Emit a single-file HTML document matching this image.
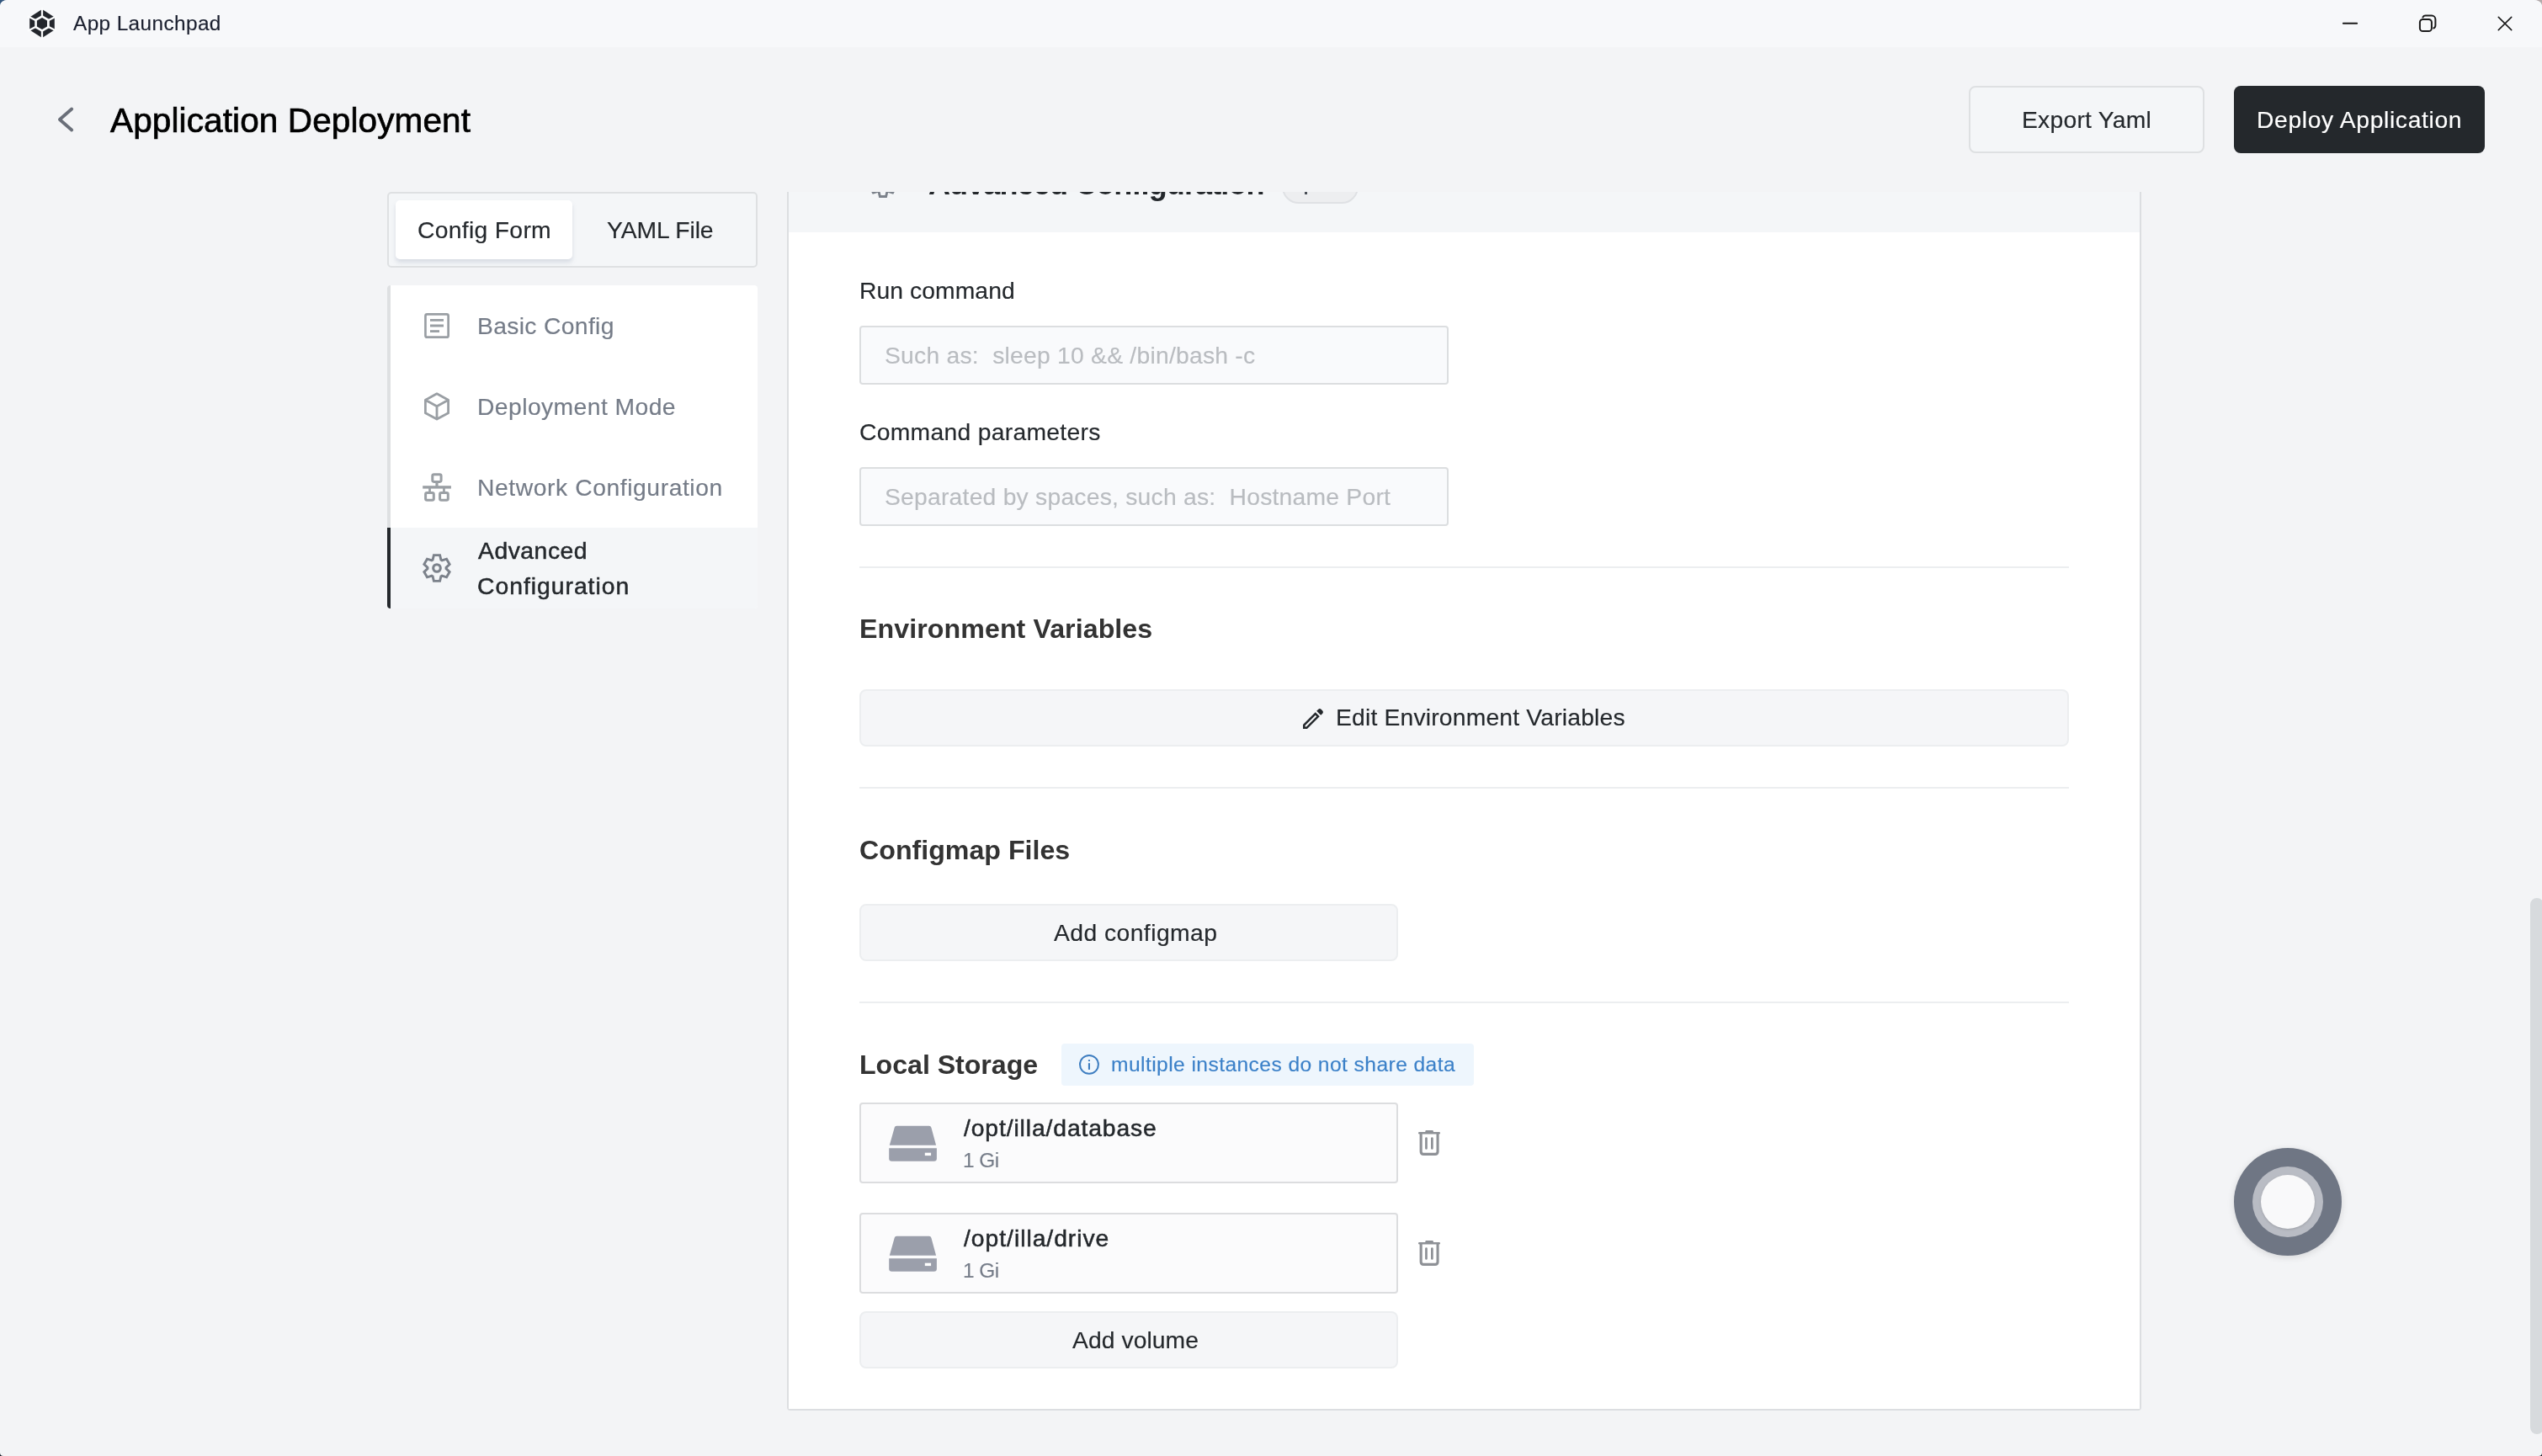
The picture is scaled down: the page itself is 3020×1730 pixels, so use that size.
<!DOCTYPE html>
<html><head><meta charset="utf-8"><title>App Launchpad</title>
<style>
*{box-sizing:border-box;margin:0;padding:0}
html,body{width:3020px;height:1730px;overflow:hidden;background:linear-gradient(#34587f,#34587f) 0 0/30px 30px no-repeat,linear-gradient(#b3abab,#b3abab) 100% 0/30px 30px no-repeat,#131a26;font-family:"Liberation Sans",sans-serif}
.cnr{position:absolute;width:24px;height:24px}
#win{position:absolute;left:0;top:0;width:3020px;height:1730px;background:#f3f4f6;border-radius:9px 10px 4px 4px / 7px 7px 4px 4px;overflow:hidden}
.a{position:absolute}
.t{position:absolute;white-space:pre;will-change:transform;font-family:"Liberation Sans",sans-serif}
#titlebar{left:0;top:0;width:3020px;height:56px;background:#f7f8fa}
svg{position:absolute;overflow:visible}
#clip{position:absolute;left:937px;top:228px;width:1605px;height:1446px;overflow:hidden;background:#fff}

</style></head>
<body>
<div id="win">
<div class="a" id="titlebar"></div>
<!-- app icon -->
<svg style="left:0;top:0" width="100" height="56" viewBox="0 0 100 56">
  <polygon points="50,11 64.8,20.6 64.8,35.4 50,45 35.2,35.4 35.2,20.6" fill="#23262c"/>
  <g stroke="#fbfcfd" stroke-width="2.3">
    <line x1="50" y1="28" x2="50" y2="9"/><line x1="50" y1="28" x2="50" y2="47"/>
    <line x1="50" y1="28" x2="67" y2="19.2"/><line x1="50" y1="28" x2="67" y2="36.8"/>
    <line x1="50" y1="28" x2="33" y2="19.2"/><line x1="50" y1="28" x2="33" y2="36.8"/>
  </g>
  <polygon points="50,17.9 58.75,22.95 58.75,33.05 50,38.1 41.25,33.05 41.25,22.95" fill="#fbfcfd"/>
  <polygon points="50,21 56,24.4 56,31.5 50,35 43.9,31.5 43.9,24.4" fill="#23262c"/>
</svg>
<!-- window controls -->
<svg style="left:2760px;top:0" width="260" height="56" viewBox="2760 0 260 56" fill="none" stroke="#1b1b1b" stroke-linecap="round" stroke-linejoin="round">
  <line x1="2783.9" y1="27.8" x2="2800.1" y2="27.8" stroke-width="2.1"/>
  <rect x="2874.9" y="23" width="14" height="14.1" rx="3.6" stroke-width="2"/>
  <path d="M2878.4,20.4 Q2879.4,18.6 2881.6,18.6 L2889,18.6 A4.4,4.4 0 0 1 2893.4,23 L2893.4,30 Q2893.4,32.7 2891.3,33.5" stroke-width="2"/>
  <path d="M2968.3,20.4 L2983.7,35.6 M2983.7,20.4 L2968.3,35.6" stroke-width="1.6"/>
</svg>
<!-- back arrow -->
<svg style="left:60px;top:120px" width="40" height="44" viewBox="60 120 40 44" fill="none" stroke="#6a6f79" stroke-width="3.8" stroke-linecap="round" stroke-linejoin="round">
  <path d="M85.2,129.5 L70.9,142 L85.2,154.5"/>
</svg>
<!-- Export Yaml -->
<div class="a" style="left:2339px;top:102px;width:280px;height:80px;border:2px solid #dee0e2;border-radius:8px;background:#f4f6f8"></div>
<!-- Deploy Application -->
<div class="a" style="left:2654px;top:102px;width:298px;height:80px;border-radius:8px;background:#24282c"></div>
<!-- Tabs -->
<div class="a" style="left:460px;top:228px;width:440px;height:90px;border:2px solid #dee0e2;border-radius:5px;background:#f4f6f8"></div>
<div class="a" style="left:470px;top:238px;width:210px;height:70px;border-radius:5px;background:#fff;box-shadow:0 4px 5px rgba(140,150,172,0.26)"></div>
<!-- Sidebar -->
<div class="a" style="left:460px;top:339px;width:440px;height:384px;border-radius:4px;overflow:hidden;background:#fff">
  <div class="a" style="left:0;top:0;width:4px;height:288px;background:#dee0e2"></div>
  <div class="a" style="left:0;top:288px;width:440px;height:96px;background:#f4f6f8"></div>
  <div class="a" style="left:0;top:288px;width:4px;height:96px;background:#24282c"></div>
</div>
<!-- sidebar icons -->
<svg style="left:495px;top:360px" width="50" height="345" viewBox="495 360 50 345" fill="none" stroke="#9a9fa4" stroke-linejoin="round">
  <!-- basic config -->
  <rect x="505.45" y="373.45" width="27.2" height="27.2" rx="2" stroke-width="2.7"/>
  <g fill="#9a9fa4" stroke="none"><rect x="511" y="379" width="16" height="2.8"/><rect x="511" y="385.5" width="16" height="3"/><rect x="511" y="392.2" width="11" height="2.8"/></g>
  <!-- cube -->
  <path d="M519,467.8 L532.6,475.3 L532.6,490.7 L519,498.1 L505.4,490.7 L505.4,475.3 Z M505.4,475.3 L519,482.7 L532.6,475.3 M519,482.7 L519,498.1" stroke-width="2.8"/>
  <!-- network -->
  <g stroke-width="3">
    <rect x="513.8" y="563.7" width="10.3" height="8.7" rx="1.8"/>
    <rect x="505.6" y="585.5" width="9.7" height="8.7" rx="1.8"/>
    <rect x="522.6" y="585.5" width="9.7" height="8.7" rx="1.8"/>
  </g>
  <g fill="#9a9fa4" stroke="none">
    <rect x="517.4" y="573.5" width="3.2" height="4.5"/>
    <rect x="502.2" y="577.2" width="33.7" height="3.4"/>
    <rect x="509.2" y="580" width="2.7" height="4.5"/>
    <rect x="526.1" y="580" width="2.7" height="4.5"/>
  </g>
  <!-- gear placeholder -->
  <path d="M514.10,665.15 L515.40,659.60 L522.60,659.60 L523.90,665.15 A11.00,11.00 0 0 1 525.08,665.83 L530.54,664.18 L534.14,670.42 L529.98,674.32 A11.00,11.00 0 0 1 529.98,675.68 L534.14,679.58 L530.54,685.82 L525.08,684.17 A11.00,11.00 0 0 1 523.90,684.85 L522.60,690.40 L515.40,690.40 L514.10,684.85 A11.00,11.00 0 0 1 512.92,684.17 L507.46,685.82 L503.86,679.58 L508.02,675.68 A11.00,11.00 0 0 1 508.02,674.32 L503.86,670.42 L507.46,664.18 L512.92,665.83 A11.00,11.00 0 0 1 514.10,665.15 Z" stroke="#7c828b" stroke-width="2.9" stroke-linejoin="miter" fill="none"/><circle cx="519" cy="675" r="4.3" stroke="#7c828b" stroke-width="3.1" fill="none"/>
</svg>
<!-- Panel border -->
<div class="a" style="left:935px;top:228px;width:1609px;height:1448px;border:2px solid #dcdee1;border-top:none;border-radius:0 0 4px 4px;background:#fff"></div>
<!-- floating button -->
<div class="a" style="left:2654px;top:1364px;width:128px;height:128px;border-radius:50%;background:#6f7684;box-shadow:0 2px 8px rgba(0,0,0,0.12)"></div>
<div class="a" style="left:2676px;top:1386px;width:84px;height:84px;border-radius:50%;background:#b9bcc4"></div>
<div class="a" style="left:2686px;top:1396px;width:64px;height:64px;border-radius:50%;background:#f9f9fa;box-shadow:0 1px 3px rgba(0,0,0,0.15)"></div>
<!-- scrollbar -->
<div class="a" style="left:3006px;top:1067px;width:16px;height:637px;border-radius:8px;background:#d7dadd"></div>

<div id="clip">
<!-- coordinates relative to (937,228) -->
<div class="a" style="left:0;top:-72px;width:1605px;height:120px;background:#f4f6f8"></div>
<!-- pill -->
<div class="a" style="left:586px;top:-26.3px;width:90.5px;height:40px;border:2px solid #dfe1e4;border-radius:20px;background:#edeef0"></div>
<div class="a" style="left:613.4px;top:-3px;width:2.6px;height:6.3px;background:#4b5058"></div>
<!-- gear residue -->
<svg style="left:0;top:0" width="300" height="20" viewBox="0 0 300 20"><path d="M107.10,-19.75 L108.40,-25.30 L115.60,-25.30 L116.90,-19.75 A11.00,11.00 0 0 1 118.08,-19.07 L123.54,-20.72 L127.14,-14.48 L122.98,-10.58 A11.00,11.00 0 0 1 122.98,-9.22 L127.14,-5.32 L123.54,0.92 L118.08,-0.73 A11.00,11.00 0 0 1 116.90,-0.05 L115.60,5.50 L108.40,5.50 L107.10,-0.05 A11.00,11.00 0 0 1 105.92,-0.73 L100.46,0.92 L96.86,-5.32 L101.02,-9.22 A11.00,11.00 0 0 1 101.02,-10.58 L96.86,-14.48 L100.46,-20.72 L105.92,-19.07 A11.00,11.00 0 0 1 107.10,-19.75 Z" stroke="#7c828b" stroke-width="2.9" stroke-linejoin="miter" fill="none"/><circle cx="112" cy="-9.9" r="4.3" stroke="#7c828b" stroke-width="3.1" fill="none"/></svg>
<!-- inputs -->
<div class="a" style="left:84px;top:159px;width:700px;height:70px;border:2px solid #dcdee0;border-radius:4px;background:#f9fafc"></div>
<div class="a" style="left:84px;top:327px;width:700px;height:70px;border:2px solid #dcdee0;border-radius:4px;background:#f9fafc"></div>
<!-- dividers -->
<div class="a" style="left:84px;top:445px;width:1437px;height:2px;background:#eceef0"></div>
<div class="a" style="left:84px;top:707px;width:1437px;height:2px;background:#eceef0"></div>
<div class="a" style="left:84px;top:962px;width:1437px;height:2px;background:#eceef0"></div>
<!-- Edit env button -->
<div class="a" style="left:84px;top:591px;width:1437px;height:68px;border:2px solid #eceef0;border-radius:8px;background:#f5f6f8"></div>
<svg style="left:607px;top:610px" width="32" height="32" viewBox="0 0 24 24" fill="#24282c"><path d="M3 17.25V21h3.75L17.81 9.94l-3.750-3.750L3 17.250zM6.02 19.1H4.9v-1.12l9.16-9.16 1.12 1.12L6.02 19.1zM15.13 5.12L16.75 3.5Q17.95 2.45 19.15 3.55L20.45 4.85Q21.55 6.05 20.5 7.25L18.88 8.87z"/></svg>
<!-- Add configmap -->
<div class="a" style="left:84px;top:846px;width:640px;height:68px;border:2px solid #eceef0;border-radius:8px;background:#f5f6f8"></div>
<!-- info badge -->
<div class="a" style="left:324px;top:1012px;width:490px;height:50px;border-radius:4px;background:#eef6fd"></div>
<svg style="left:340px;top:1020px" width="34" height="34" viewBox="1277 1248 34 34" fill="none">
  <circle cx="1293.95" cy="1264.85" r="10.95" stroke="#3d7dc0" stroke-width="2"/>
  <rect x="1292.9" y="1259.2" width="2.1" height="1.8" fill="#3d7dc0"/>
  <rect x="1292.9" y="1263.2" width="2.1" height="7.7" fill="#3d7dc0"/>
</svg>
<!-- storage items -->
<div class="a" style="left:84px;top:1082px;width:640px;height:96px;border:2px solid #dcdddf;border-radius:4px;background:#fbfbfc"></div>
<div class="a" style="left:84px;top:1213px;width:640px;height:96px;border:2px solid #dcdddf;border-radius:4px;background:#fbfbfc"></div>
<svg style="left:113px;top:1102px" width="70" height="56" viewBox="1050 1330 70 56">
<path d="M1065.3,1337.7 L1103.8,1337.7 Q1105.9,1337.7 1106.4,1339.8 L1112.1,1360.8 L1056.8,1360.8 L1062.7,1339.8 Q1063.2,1337.7 1065.3,1337.7 Z" fill="#9b9fab"/>
<path d="M1056.2,1364.2 L1112.9,1364.2 L1112.9,1376.6 Q1112.9,1379.8 1109.7,1379.8 L1059.4,1379.8 Q1056.2,1379.8 1056.2,1376.6 Z" fill="#9b9fab"/>
<rect x="1098.8" y="1369.7" width="7.3" height="3.4" fill="#fff"/>
</svg>
<svg style="left:113px;top:1233px" width="70" height="56" viewBox="1050 1330 70 56">
<path d="M1065.3,1337.7 L1103.8,1337.7 Q1105.9,1337.7 1106.4,1339.8 L1112.1,1360.8 L1056.8,1360.8 L1062.7,1339.8 Q1063.2,1337.7 1065.3,1337.7 Z" fill="#9b9fab"/>
<path d="M1056.2,1364.2 L1112.9,1364.2 L1112.9,1376.6 Q1112.9,1379.8 1109.7,1379.8 L1059.4,1379.8 Q1056.2,1379.8 1056.2,1376.6 Z" fill="#9b9fab"/>
<rect x="1098.8" y="1369.7" width="7.3" height="3.4" fill="#fff"/>
</svg>
<svg style="left:743px;top:1110px" width="36" height="40" viewBox="1680 1338 36 40" fill="none" stroke="#8e9196">
<path d="M1686.3,1346.25 L1709.7,1346.25" stroke-width="2.6" stroke-linecap="round"/>
<path d="M1694.5,1345 L1694.5,1344.3 L1701.7,1344.3 L1701.7,1345" stroke-width="2.4" stroke-linejoin="round"/>
<path d="M1688.15,1347 L1688.15,1368.2 Q1688.15,1371.35 1691.3,1371.35 L1704.9,1371.35 Q1708.05,1371.35 1708.05,1368.2 L1708.05,1347" stroke-width="3.1"/>
<path d="M1694.45,1352.5 L1694.45,1364.5 M1701.35,1352.5 L1701.35,1364.5" stroke-width="2.7" stroke-linecap="round"/>
</svg>
<svg style="left:743px;top:1241px" width="36" height="40" viewBox="1680 1338 36 40" fill="none" stroke="#8e9196">
<path d="M1686.3,1346.25 L1709.7,1346.25" stroke-width="2.6" stroke-linecap="round"/>
<path d="M1694.5,1345 L1694.5,1344.3 L1701.7,1344.3 L1701.7,1345" stroke-width="2.4" stroke-linejoin="round"/>
<path d="M1688.15,1347 L1688.15,1368.2 Q1688.15,1371.35 1691.3,1371.35 L1704.9,1371.35 Q1708.05,1371.35 1708.05,1368.2 L1708.05,1347" stroke-width="3.1"/>
<path d="M1694.45,1352.5 L1694.45,1364.5 M1701.35,1352.5 L1701.35,1364.5" stroke-width="2.7" stroke-linecap="round"/>
</svg>
<!-- Add volume -->
<div class="a" style="left:84px;top:1330px;width:640px;height:68px;border:2px solid #eceef0;border-radius:8px;background:#f5f6f8"></div>

<div class="t" style="left:166.10px;top:-27.40px;font-size:36px;line-height:36px;font-weight:700;color:#24282c;letter-spacing:-0.881px;">Advanced Configuration</div>
</div>
<div class="t" style="left:86.90px;top:16.16px;font-size:24.4px;line-height:24.4px;font-weight:400;color:#1a1f2e;letter-spacing:0.375px;-webkit-text-stroke:0.15px #1a1f2e;">App Launchpad</div>
<div class="t" style="left:130.90px;top:122.58px;font-size:40.5px;line-height:40.5px;font-weight:400;color:#000;letter-spacing:0.119px;-webkit-text-stroke:0.7px #000;">Application Deployment</div>
<div class="t" style="left:2401.70px;top:127.94px;font-size:28.3px;line-height:28.3px;font-weight:400;color:#24282c;letter-spacing:0.240px;-webkit-text-stroke:0.15px #24282c;">Export Yaml</div>
<div class="t" style="left:2681.00px;top:127.94px;font-size:28.3px;line-height:28.3px;font-weight:400;color:#fff;letter-spacing:0.629px;-webkit-text-stroke:0.15px #fff;">Deploy Application</div>
<div class="t" style="left:495.50px;top:258.84px;font-size:28.3px;line-height:28.3px;font-weight:400;color:#24282c;letter-spacing:0.300px;-webkit-text-stroke:0.15px #24282c;">Config Form</div>
<div class="t" style="left:721.30px;top:258.84px;font-size:28.3px;line-height:28.3px;font-weight:400;color:#24282c;letter-spacing:-0.100px;-webkit-text-stroke:0.15px #24282c;">YAML File</div>
<div class="t" style="left:567.00px;top:372.75px;font-size:28.3px;line-height:28.3px;font-weight:400;color:#757c88;letter-spacing:0.327px;-webkit-text-stroke:0.15px #757c88;">Basic Config</div>
<div class="t" style="left:566.90px;top:468.94px;font-size:28.3px;line-height:28.3px;font-weight:400;color:#757c88;letter-spacing:0.421px;-webkit-text-stroke:0.15px #757c88;">Deployment Mode</div>
<div class="t" style="left:566.90px;top:564.95px;font-size:28.3px;line-height:28.3px;font-weight:400;color:#757c88;letter-spacing:0.565px;-webkit-text-stroke:0.15px #757c88;">Network Configuration</div>
<div class="t" style="left:568.00px;top:639.70px;font-size:28.3px;line-height:28.3px;font-weight:400;color:#24282c;letter-spacing:0.529px;-webkit-text-stroke:0.5px #24282c;">Advanced</div>
<div class="t" style="left:567.20px;top:681.85px;font-size:28.3px;line-height:28.3px;font-weight:400;color:#24282c;letter-spacing:0.992px;-webkit-text-stroke:0.5px #24282c;">Configuration</div>
<div class="t" style="left:1021.00px;top:330.84px;font-size:28.3px;line-height:28.3px;font-weight:400;color:#24282c;letter-spacing:0.070px;-webkit-text-stroke:0.15px #24282c;">Run command</div>
<div class="t" style="left:1051.30px;top:407.94px;font-size:28.3px;line-height:28.3px;font-weight:400;color:#b9bcc0;letter-spacing:0.230px;-webkit-text-stroke:0.15px #b9bcc0;">Such as:  sleep 10 &amp;&amp; /bin/bash -c</div>
<div class="t" style="left:1020.90px;top:499.05px;font-size:28.3px;line-height:28.3px;font-weight:400;color:#24282c;letter-spacing:0.288px;-webkit-text-stroke:0.15px #24282c;">Command parameters</div>
<div class="t" style="left:1050.90px;top:576.25px;font-size:28.3px;line-height:28.3px;font-weight:400;color:#b9bcc0;letter-spacing:0.221px;-webkit-text-stroke:0.15px #b9bcc0;">Separated by spaces, such as:  Hostname Port</div>
<div class="t" style="left:1020.60px;top:731.23px;font-size:32.2px;line-height:32.2px;font-weight:700;color:#333;letter-spacing:0.060px;">Environment Variables</div>
<div class="t" style="left:1587.20px;top:838.35px;font-size:28.3px;line-height:28.3px;font-weight:400;color:#24282c;letter-spacing:0.176px;-webkit-text-stroke:0.15px #24282c;">Edit Environment Variables</div>
<div class="t" style="left:1021.20px;top:993.53px;font-size:32.2px;line-height:32.2px;font-weight:700;color:#333;letter-spacing:-0.014px;">Configmap Files</div>
<div class="t" style="left:1251.50px;top:1093.64px;font-size:28.3px;line-height:28.3px;font-weight:400;color:#24282c;letter-spacing:0.433px;-webkit-text-stroke:0.15px #24282c;">Add configmap</div>
<div class="t" style="left:1020.90px;top:1249.33px;font-size:32.2px;line-height:32.2px;font-weight:700;color:#333;letter-spacing:-0.058px;">Local Storage</div>
<div class="t" style="left:1320.10px;top:1252.79px;font-size:24.6px;line-height:24.6px;font-weight:400;color:#3b80c8;letter-spacing:0.426px;-webkit-text-stroke:0.15px #3b80c8;">multiple instances do not share data</div>
<div class="t" style="left:1145.30px;top:1326.04px;font-size:28.3px;line-height:28.3px;font-weight:400;color:#24282c;letter-spacing:0.876px;-webkit-text-stroke:0.5px #24282c;">/opt/illa/database</div>
<div class="t" style="left:1144.10px;top:1366.96px;font-size:24.4px;line-height:24.4px;font-weight:400;color:#757c88;letter-spacing:-0.533px;-webkit-text-stroke:0.15px #757c88;">1 Gi</div>
<div class="t" style="left:1145.30px;top:1457.04px;font-size:28.3px;line-height:28.3px;font-weight:400;color:#24282c;letter-spacing:0.964px;-webkit-text-stroke:0.5px #24282c;">/opt/illa/drive</div>
<div class="t" style="left:1144.10px;top:1497.96px;font-size:24.4px;line-height:24.4px;font-weight:400;color:#757c88;letter-spacing:-0.533px;-webkit-text-stroke:0.15px #757c88;">1 Gi</div>
<div class="t" style="left:1273.60px;top:1578.44px;font-size:28.3px;line-height:28.3px;font-weight:400;color:#24282c;letter-spacing:0.056px;-webkit-text-stroke:0.15px #24282c;">Add volume</div>
</div>
</body></html>
